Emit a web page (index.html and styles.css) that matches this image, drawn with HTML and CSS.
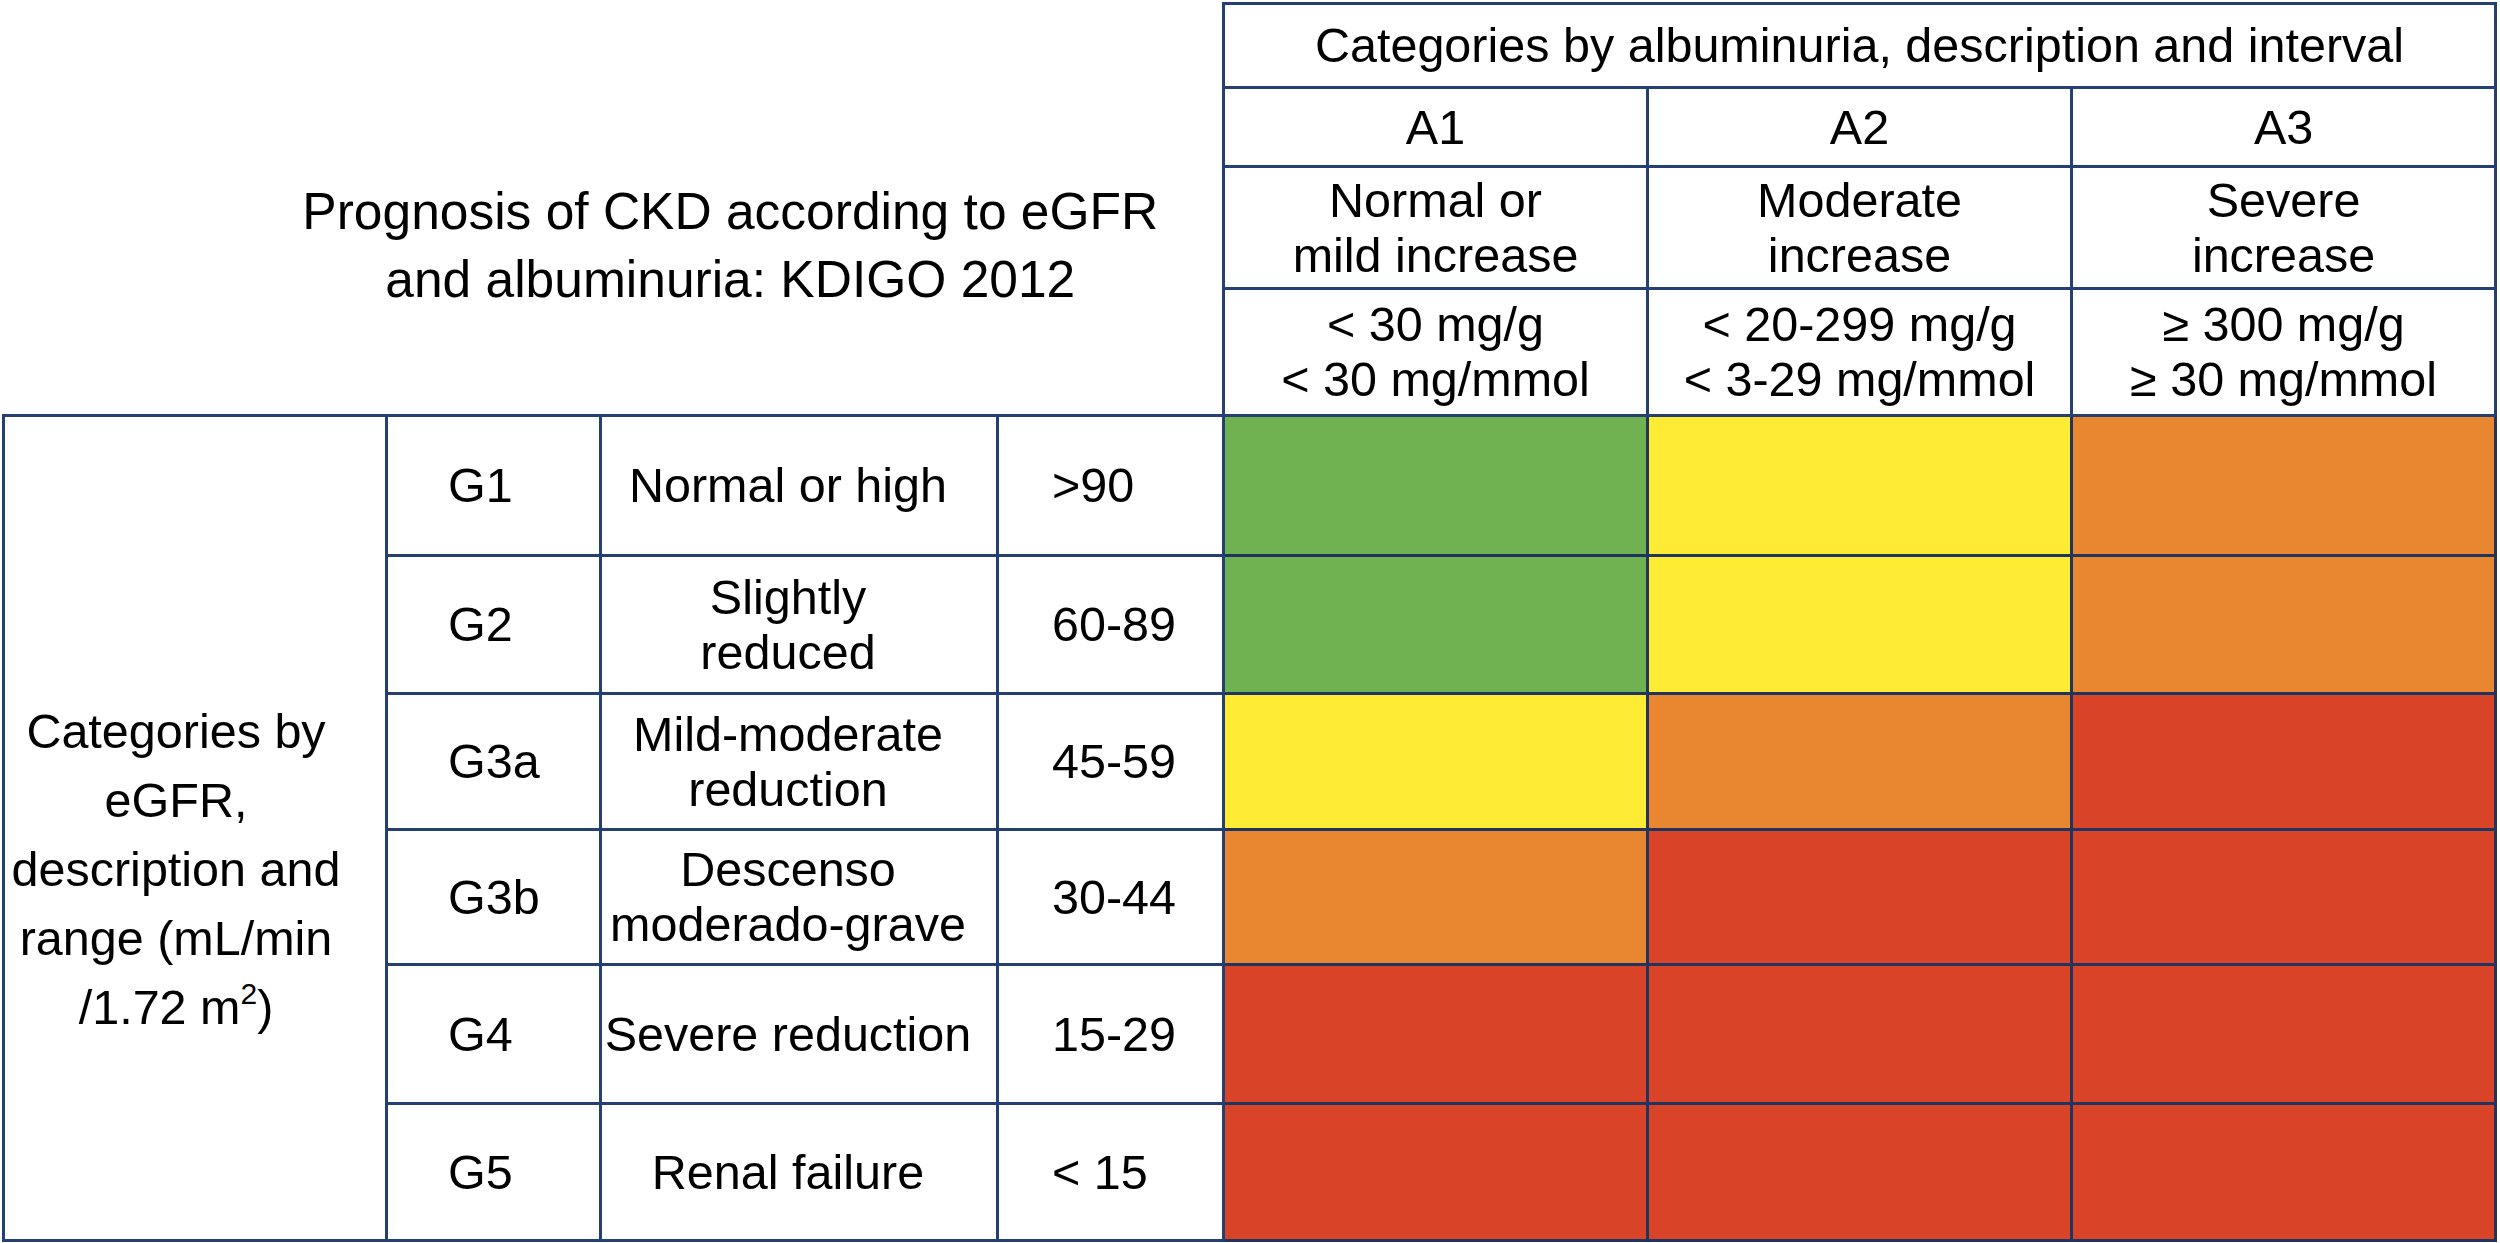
FILE: index.html
```html
<!DOCTYPE html>
<html>
<head>
<meta charset="utf-8">
<link rel="stylesheet" href="styles.css">
</head>
<body>
<div class="wrap">
<table class="ckd">
  <colgroup>
    <col class="c-cat"><col class="c-g"><col class="c-desc"><col class="c-range">
    <col class="c-a"><col class="c-a"><col class="c-a3">
  </colgroup>
  <tr class="h1">
    <td class="title" rowspan="4" colspan="4"><div class="title-text">Prognosis of CKD according to eGFR<br>and albuminuria: KDIGO 2012</div></td>
    <td class="hc" colspan="3">Categories by albuminuria, description and interval</td>
  </tr>
  <tr class="h2">
    <td class="hc">A1</td><td class="hc">A2</td><td class="hc">A3</td>
  </tr>
  <tr class="h3">
    <td class="hc">Normal or<br>mild increase</td><td class="hc">Moderate<br>increase</td><td class="hc">Severe<br>increase</td>
  </tr>
  <tr class="h4">
    <td class="hc">&lt; 30 mg/g<br>&lt; 30 mg/mmol</td><td class="hc">&lt; 20-299 mg/g<br>&lt; 3-29 mg/mmol</td><td class="hc">&ge; 300 mg/g<br>&ge; 30 mg/mmol</td>
  </tr>
  <tr class="r r1">
    <td class="cat" rowspan="6"><div class="cat-text">Categories by<br>eGFR,<br>description and<br>range (mL/min<br>/1.72 m<sup>2</sup>)</div></td>
    <td class="g">G1</td><td class="desc">Normal or high</td><td class="rng">&gt;90</td>
    <td class="green"></td><td class="yellow"></td><td class="orange"></td>
  </tr>
  <tr class="r r2">
    <td class="g">G2</td><td class="desc">Slightly<br>reduced</td><td class="rng">60-89</td>
    <td class="green"></td><td class="yellow"></td><td class="orange"></td>
  </tr>
  <tr class="r r3">
    <td class="g">G3a</td><td class="desc">Mild-moderate<br>reduction</td><td class="rng">45-59</td>
    <td class="yellow"></td><td class="orange"></td><td class="red"></td>
  </tr>
  <tr class="r r4">
    <td class="g">G3b</td><td class="desc">Descenso<br>moderado-grave</td><td class="rng">30-44</td>
    <td class="orange"></td><td class="red"></td><td class="red"></td>
  </tr>
  <tr class="r r5">
    <td class="g">G4</td><td class="desc">Severe reduction</td><td class="rng">15-29</td>
    <td class="red"></td><td class="red"></td><td class="red"></td>
  </tr>
  <tr class="r r6">
    <td class="g">G5</td><td class="desc">Renal failure</td><td class="rng">&lt; 15</td>
    <td class="red"></td><td class="red"></td><td class="red"></td>
  </tr>
</table>
</div>
</body>
</html>
```
FILE: styles.css
```css
html, body {
  margin: 0;
  padding: 0;
  background: #ffffff;
}
.wrap {
  padding: 2px 0 0 2px;
}
.ckd {
  border-collapse: collapse;
  table-layout: fixed;
  width: 2492px;
  font-family: "Liberation Sans", Arial, sans-serif;
  font-size: 48.5px;
  color: #000;
}
.c-cat { width: 383px; }
.c-g { width: 214px; }
.c-desc { width: 397px; }
.c-range { width: 226px; }
.c-a { width: 424px; }
.c-a3 { width: 424px; }
.ckd td {
  border: 3px solid #243f72;
  padding: 0;
  vertical-align: middle;
  line-height: 55px;
}
.ckd td.title {
  border-top: none;
  border-left: none;
  text-align: center;
  padding: 72px 0 0 235px;
}
.title-text {
  font-size: 51.5px;
  line-height: 68px;
}
.h1 { height: 84px; }
.h2 { height: 79px; }
.h3 { height: 122px; }
.h4 { height: 127px; }
.r1 { height: 140px; }
.r2 { height: 138px; }
.r3 { height: 136px; }
.r4 { height: 135px; }
.r5 { height: 139px; }
.r6 { height: 137px; }
.hc {
  text-align: center;
}
.cat {
  text-align: center;
  padding: 82px 38px 0 0 !important;
}
.cat-text {
  line-height: 69px;
}
.cat sup {
  font-size: 30px;
  line-height: 0;
  vertical-align: 20px;
}
.g {
  padding-left: 60px !important;
}
.desc {
  text-align: center;
  padding-right: 22px !important;
}
.rng {
  padding-left: 53px !important;
}
.ckd td.green { background: #70b252; border-color: #1f3560; }
.ckd td.yellow { background: #fdec33; border-color: #1f3560; }
.ckd td.orange { background: #e8872f; border-color: #1f3560; }
.ckd td.red { background: #d94328; border-color: #1f3560; }
```
